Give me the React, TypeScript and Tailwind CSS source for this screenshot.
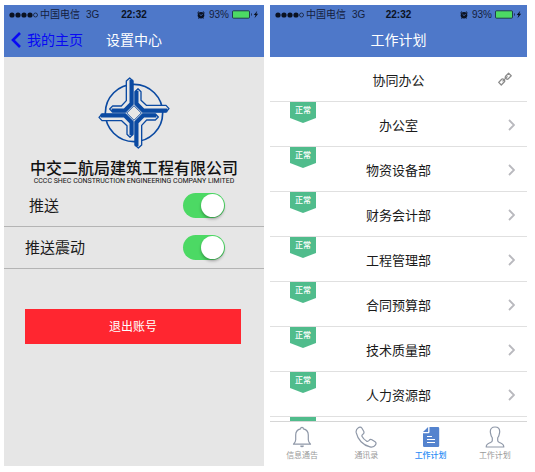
import type { ReactNode } from "react";

const departments = [
  "办公室",
  "物资设备部",
  "财务会计部",
  "工程管理部",
  "合同预算部",
  "技术质量部",
  "人力资源部",
];

const tabs = [
  { id: "notice", label: "信息通告", icon: <BellIcon /> },
  { id: "contacts", label: "通讯录", icon: <PhoneIcon /> },
  { id: "plan", label: "工作计划", icon: <DocIcon />, active: true },
  { id: "profile", label: "工作计划", icon: <PersonIcon /> },
];

function BellIcon() {
  return (
    <svg viewBox="0 0 20 22" className="h-[22px] w-5" fill="none" stroke="#8f98a8" strokeWidth="1.2" strokeLinejoin="round" strokeLinecap="round">
      <path d="M8.6 2.8a1.4 1.4 0 0 1 2.8 0C14.6 3.500 16.300 6 16.300 9v4.800c0 1.800.8 2.900 2.200 4.400H1.500c1.400-1.500 2.200-2.600 2.200-4.400V9c0-3 1.700-5.500 4.900-6.200Z" />
      <path d="M8.700 20a1.400 1.200 0 0 0 2.600 0Z" fill="#8f98a8" />
    </svg>
  );
}

function PhoneIcon() {
  return (
    <svg viewBox="0 0 22 22" className="size-[22px]" fill="none" stroke="#8f98a8" strokeWidth="1.2" strokeLinejoin="round">
      <path d="M3.300 1.700C4.500.8 6 .9 6.800 2l1.900 3.300c.6 1.200.2 2.200-.8 2.900-1 .7-1.300 1.400-.8 2.400 1 1.900 2.500 3.400 4.400 4.500 1 .5 1.800.3 2.500-.6.8-1 1.800-1.300 2.900-.7l3.200 1.900c1.100.7 1.200 2 .4 3.200-1.200 1.900-3.200 2.500-5.500 2C8 19.300 2.700 13.500 1.200 6.700.8 4.600 1.500 2.900 3.300 1.700Z" />
    </svg>
  );
}

function DocIcon() {
  return (
    <svg viewBox="0 0 18 22" className="h-[22px] w-[18px]">
      <path d="M7.500 1H16a1.200 1.200 0 0 1 1.200 1.200v17.600A1.200 1.200 0 0 1 16 21H2.200A1.200 1.200 0 0 1 1 19.800V7.300h5.300a1.200 1.200 0 0 0 1.200-1.200Z" fill="#5483ce" />
      <path d="M1 5.900 6.100 1v4.900Z" fill="#5483ce" />
      <path d="M5 10.500h5M5 13.500h8M5 16.500h8" stroke="#fff" strokeWidth="1" />
    </svg>
  );
}

function PersonIcon() {
  return (
    <svg viewBox="0 0 20 22" className="h-[22px] w-5" fill="none" stroke="#8f98a8" strokeWidth="1.2" strokeLinejoin="round">
      <path d="M10 1C6.800 1 5.300 3 5.300 5.500c0 1.300.2 2 .5 2.800.3 1.800.8 2.500 1.500 3.500v2.700c0 1-.5 1.500-1.700 2C3 17.600 1.200 18 1.200 21h17.600c0-3-1.800-3.400-4.400-4.500-1.200-.5-1.700-1-1.700-2v-2.700c.7-1 1.200-1.700 1.500-3.500.3-.8.500-1.500.5-2.800C14.700 3 13.200 1 10 1Z" />
    </svg>
  );
}

function LinkIcon() {
  return (
    <svg viewBox="0 0 14 14" className="size-3.5" fill="none" stroke="#8b8b8b" strokeWidth="1.300" strokeLinejoin="round">
      <path d="m7.600 4.300 3-3.100 2.600 2.500-3 3.200c-.7.500-1.400.4-2-.1l-.6-.6c-.5-.6-.5-1.300 0-1.900Z" />
      <path d="m3.700 7.300-3 3.100 2.600 2.600 3.100-3.200c.5-.7.400-1.300-.1-1.800l-.7-.7c-.6-.5-1.300-.6-1.900 0Z" />
      <path d="m4.500 9.400 5-5" />
    </svg>
  );
}

function CompanyLogo() {
  return (
    <svg viewBox="-2 0 270 240" className="h-20 w-[90px]" role="img" aria-label="中交二航局">
      <circle cx="133" cy="123" r="86" fill="none" stroke="#0b4aa2" strokeWidth="5" />
      {/* one arm, turned four times round the centre */}
      {[0, 90, 180, 270].map((angle) => (
        <g key={angle} transform={`rotate(${angle} 133 123)`}>
          <path
            d="M110 27 120 18 130 27V97L107 120H69L60 111 69 102H95L110 86Z"
            fill="#e6e6e6"
            stroke="#0b4aa2"
            strokeWidth="4"
            strokeLinejoin="round"
          />
          <path d="M125 23V95L105 115H66" fill="none" stroke="#0b4aa2" strokeWidth="11" />
        </g>
      ))}
      <path d="M133 101 155 123 133 145 111 123Z" fill="#e6e6e6" stroke="#0b4aa2" strokeWidth="3" />
    </svg>
  );
}

function StatusBar() {
  return (
    <div className="grid h-[18px] grid-cols-[1fr_auto_1fr] items-center px-[5px] pt-px text-[10px] leading-none text-[#14203c]">
      <div className="flex items-center">
        <svg viewBox="0 0 29 6" className="h-1.5 w-[29px]" fill="#0b1222">
          {[3, 9, 15, 21].map((cx) => (
            <circle key={cx} cx={cx} cy="3" r="2.600" />
          ))}
          <circle cx="26.500" cy="3" r="2" fill="none" stroke="#0b1222" strokeWidth=".7" />
        </svg>
        <span className="ml-0.5">中国电信</span>
        <span className="ml-1.5">3G</span>
      </div>
      <span className="font-bold text-[#0b1222]">22:32</span>
      <div className="flex items-center justify-end">
        <svg viewBox="0 0 8 8" className="mr-1 size-2">
          <circle cx="4" cy="4.300" r="3.300" fill="#0b1222" />
          <path d="M.4 2 2.100.5M7.600 2 5.900.5M1.500 7.600l.8-.8M6.500 7.600l-.8-.8" stroke="#0b1222" strokeWidth="1" />
          <path d="m2.500 3.200 1.500 1.400 1.700-1.300" fill="none" stroke="#4e78c9" strokeWidth=".8" />
        </svg>
        <span>93%</span>
        <svg viewBox="0 0 27 9" className="ml-[3px] h-[9px] w-[27px]">
          <rect x=".5" y=".8" width="17" height="7.400" rx="1" fill="#4cd964" stroke="#14203c" strokeWidth=".8" />
          <path d="M19 3v3c1-.3 1-2.700 0-3Z" fill="#14203c" />
          <path d="m25.300.8-3.600 4.200h1.800l-1 3.200 3.700-4.400h-1.900Z" fill="#0b1222" />
        </svg>
      </div>
    </div>
  );
}

function ScreenHeader({ title, children }: { title: string; children?: ReactNode }) {
  return (
    <header className="bg-[#4e78c9]">
      <StatusBar />
      <div className="grid h-[34px] grid-cols-[1fr_auto_1fr] items-center px-[7px]">
        <div>{children}</div>
        <h1 className="text-sm text-white">{title}</h1>
      </div>
    </header>
  );
}

function Toggle({ id }: { id: string }) {
  return (
    <input
      id={id}
      type="checkbox"
      role="switch"
      defaultChecked
      className="flex h-[25px] w-[42px] appearance-none items-center rounded-full bg-[#c9c9c9] px-px before:size-[23px] before:rounded-full before:bg-white before:shadow-[0_2px_3px_rgba(0,0,0,0.3)] checked:justify-end checked:bg-[#4cd964]"
    />
  );
}

function SettingsScreen() {
  return (
    <section className="flex flex-[260] flex-col bg-[#e6e6e6]">
      <ScreenHeader title="设置中心">
        <a href="#home" className="flex items-center gap-1.5 text-sm text-[#0808f5]">
          <svg viewBox="0 0 10 16" className="h-4 w-2.5" fill="none" stroke="currentColor" strokeWidth="2.600">
            <path d="M9 1 2 8l7 7" />
          </svg>
          我的主页
        </a>
      </ScreenHeader>

      <div className="flex flex-col items-center pt-[15px] text-[#111]">
        <CompanyLogo />
        <p className="mt-[9px] text-base leading-4 font-medium whitespace-nowrap">中交二航局建筑工程有限公司</p>
        <p className="font-['Roboto','Liberation_Sans',sans-serif] text-[7px] leading-2 whitespace-nowrap">
          CCCC SHEC CONSTRUCTION ENGINEERING COMPANY LIMITED
        </p>
      </div>

      <div className="flex h-[42px] items-center justify-between border-b border-[#b4b4b4] pr-[39px] pl-[25px]">
        <label htmlFor="push" className="pt-0.5 text-[15px] text-[#1a1a1a]">推送</label>
        <Toggle id="push" />
      </div>
      <div className="flex h-[42px] items-center justify-between border-b border-[#b4b4b4] pr-[39px] pl-[21px]">
        <label htmlFor="vibrate" className="pt-0.5 text-[15px] text-[#1a1a1a]">推送震动</label>
        <Toggle id="vibrate" />
      </div>

      <button type="button" className="mt-10 mr-[23px] ml-[21px] h-[35px] bg-[#ff2630] text-xs text-white">
        退出账号
      </button>
    </section>
  );
}

function DepartmentRow({ name }: { name: string }) {
  return (
    <li className="relative h-[45px] shrink-0 border-b border-[#e0e0e0]">
      <a href="#department" className="grid h-full grid-cols-[1fr_auto_1fr] items-center text-[13px] text-[#1a1a1a]">
        <span />
        <span className="pt-1">{name}</span>
        <svg viewBox="0 0 7 12" className="mt-0.5 mr-3 h-3 w-[7px] justify-self-end" fill="none" stroke="#b9b9be" strokeWidth="1.800">
          <path d="m1 1 5 5-5 5" />
        </svg>
      </a>
      <span className="absolute top-0 left-5 h-[21px] w-[26px] bg-[#50bc8c] text-center text-[8px] leading-[18px] font-medium text-white [clip-path:polygon(0_0,100%_0,100%_76%,50%_100%,0_76%)]">
        正常
      </span>
    </li>
  );
}

function PlanScreen() {
  return (
    <section className="flex flex-[257] flex-col bg-white">
      <ScreenHeader title="工作计划" />

      <ul className="flex min-h-0 flex-1 flex-col overflow-hidden">
        <li className="grid h-[45px] shrink-0 grid-cols-[1fr_auto_1fr] items-center border-b border-[#e0e0e0] text-[13px] text-[#1a1a1a]">
          <span />
          <span className="pt-1">协同办公</span>
          <button type="button" aria-label="链接" className="mr-[15px] justify-self-end">
            <LinkIcon />
          </button>
        </li>
        {departments.map((name) => (
          <DepartmentRow key={name} name={name} />
        ))}
        {/* top of the next row's badge, peeking out above the tab bar */}
        <li className="shrink-0 pl-5" aria-hidden="true">
          <span className="block h-4 w-[26px] bg-[#50bc8c]" />
        </li>
      </ul>

      <nav className="grid h-[45px] shrink-0 grid-cols-4 border-t border-[#d6d6d6] bg-white">
        {tabs.map((tab) => (
          <a
            key={tab.id}
            href={`#${tab.id}`}
            className={`flex flex-col items-center gap-0.5 pt-1 text-[8px] leading-3 ${
              tab.active ? "font-medium text-[#2b8cf5]" : "text-[#9a9a9a]"
            }`}
          >
            {tab.icon}
            {tab.label}
          </a>
        ))}
      </nav>
    </section>
  );
}

export default function App() {
  return (
    <main className="flex h-screen gap-1.5 bg-white pt-[5px] pr-2 pb-1.5 pl-1 font-['Liberation_Sans','Noto_Sans_CJK_SC',sans-serif]">
      <SettingsScreen />
      <PlanScreen />
    </main>
  );
}
